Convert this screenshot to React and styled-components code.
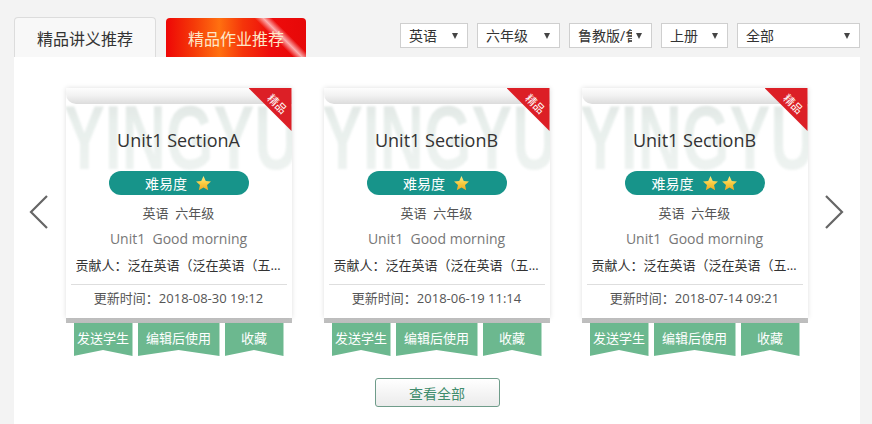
import React from "react";
import styled, { createGlobalStyle } from "styled-components";

const GlobalStyle = createGlobalStyle`
    body { margin : 0; background : #f3f3f3; font-family : "Open Sans", "Noto Sans CJK SC", sans-serif; }
`;
const Page = styled.div`
    width : 846px; padding : 17px 0 0 14px;
`;
const TopBar = styled.div`
    display : flex; justify-content : space-between; align-items : flex-start;
    height : 40px;
`;
const Tabs = styled.div`
    display : flex; gap : 10px; align-items : flex-end; height : 40px;
`;
const Tab = styled.div`
    width : 140px; height : 39px;
    border : ${(props) => (props.$active ? "none" : "1px solid #dcdcdc")};
    border-bottom : none;
    border-radius : 4px 4px 0 0;
    display : flex; align-items : center; justify-content : center;
    font-size : 16px;
    color : ${(props) => (props.$active ? "#fde8c8" : "#333")};
    background : ${(props) => (props.$active
        ? "linear-gradient(45deg, transparent 71%, rgba(255,200,200,.85) 76%, transparent 81%), linear-gradient(90deg, #ee0606 0%, #f53a08 20%, #ff7010 38%, #f5340a 55%, #ee0c0c 75%, #e60808 100%)"
        : "#f8f8f8")};
`;
const Filters = styled.div`
    display : flex; gap : 9px; margin-top : 6px;
`;
const Select = styled.div`
    width : ${(props) => props.$w}px; height : 25px; box-sizing : border-box;
    border : 1px solid #cfcfcf; background : #fff;
    display : flex; align-items : center; padding : 0 9px 0 8px; gap : 4px;
    font-size : 14px; color : #333;
`;
const SelectText = styled.span`
    flex : 1; overflow : hidden; white-space : nowrap; line-height : 23px;
`;
const Caret = styled.span`
    width : 0; height : 0;
    border-left : 3px solid transparent; border-right : 3px solid transparent;
    border-top : 6px solid #444;
`;
const Panel = styled.div`
    background : #fff; padding : 31px 0 30px; min-height : 340px; box-sizing : border-box;
    display : flex; flex-direction : column; align-items : center;
`;
const Carousel = styled.div`
    width : 100%; box-sizing : border-box; padding : 0 15px 0 14px;
    display : flex; justify-content : space-between; align-items : flex-start;
`;
const Arrow = styled.div`
    width : 22px; height : 36px; margin-top : 106px; color : #666;
`;
const Cards = styled.div`
    display : flex; gap : 32px;
`;
const CardWrap = styled.div`
    width : 226px; display : flex; flex-direction : column; align-items : center;
`;
const Card = styled.div`
    position : relative; width : 100%; overflow : hidden; background : #fff;
    box-shadow : 0 0 5px rgba(0,0,0,0.13);
`;
const Curl = styled.div`
    height : 16px; background : linear-gradient(#fdfdfd, #f1f1f1 50%, #dcdcdc);
    border-radius : 0 0 0 10px; position : relative; z-index : 1;
`;
const Watermark = styled.div`
    position : absolute; top : 0px; left : -2px; font-size : 90px; font-weight : bold;
    line-height : 100px; white-space : nowrap; font-family : "Liberation Sans", sans-serif;
    transform : scaleX(0.68); transform-origin : left top;
    background : linear-gradient(#dde1df, #e8efec 35%, #f0f4f2);
    -webkit-background-clip : text; background-clip : text; color : transparent;
    filter : blur(1.3px);
`;
const Corner = styled.div`
    position : absolute; top : 0; right : 0; width : 43px; height : 43px; z-index : 2;
    background : #dc1f26; clip-path : polygon(0 0, 100% 0, 100% 100%);
`;
const CornerText = styled.span`
    position : absolute; left : 13px; top : 9px; width : 30px; height : 14px;
    font-size : 11px; line-height : 14px; color : #fff; text-align : center;
    transform : rotate(45deg);
`;
const Body = styled.div`
    position : relative; z-index : 1; padding : 0 10px 7px;
    display : flex; flex-direction : column; align-items : center;
`;
const Title = styled.div`
    margin-top : 24px; font-size : 18px; line-height : 24px; color : #333;
`;
const Pill = styled.div`
    margin-top : 19px; margin-bottom : 5px; width : 140px; height : 24px; border-radius : 12px;
    background : #17948a; color : #fff; font-size : 14px;
    display : flex; align-items : center; justify-content : center; gap : 8px;
`;
const Stars = styled.span`
    display : flex; gap : 2px;
`;
const Line = styled.div`
    width : 100%; text-align : center; line-height : 26px;
    font-size : ${(props) => props.$size || 13}px;
    color : ${(props) => props.$color || "#333"};
    white-space : pre; overflow : hidden; text-overflow : ellipsis;
`;
const Divider = styled.div`
    align-self : stretch; margin : 6px -5px 0; height : 1px; background : #dedede;
`;
const Shelf = styled.div`
    width : 100%; height : 5px; background : linear-gradient(#c9c9c9, #bcbcbc);
`;
const Actions = styled.div`
    display : flex; gap : 5px;
`;
const ActionBtn = styled.div`
    width : ${(props) => props.$w}px; height : 33px; padding-bottom : 5px; box-sizing : border-box;
    background : #6cb88f; color : #fff; font-size : 13px;
    display : flex; align-items : center; justify-content : center;
    clip-path : polygon(0 0, 100% 0, 100% 100%, 50% calc(100% - 6px), 0 100%);
`;
const MoreBtn = styled.div`
    margin-top : 22px; width : 125px; height : 29px; box-sizing : border-box;
    border : 1px solid #6f9c8a; border-radius : 3px;
    background : linear-gradient(#ffffff, #ebebeb);
    display : flex; align-items : center; justify-content : center;
    font-size : 14px; color : #3f8c6c;
`;

const Star = () => (
    <svg width="17" height="17" viewBox="0 0 24 24">
        <defs>
            <linearGradient id="sg" x1="0" y1="0" x2="0" y2="1">
                <stop offset="0" stopColor="#ffec8a" />
                <stop offset="0.55" stopColor="#f8c93c" />
                <stop offset="1" stopColor="#eea726" />
            </linearGradient>
        </defs>
        <path d="M12 1.5l3.2 6.9 7.3.8-5.5 5 1.6 7.4L12 17.8l-6.6 3.8L7 14.2l-5.5-5 7.3-.8z" fill="url(#sg)" />
    </svg>
);

const Chevron = ({ dir }) => (
    <svg width="22" height="36" viewBox="0 0 22 36">
        <polyline points={dir === "left" ? "19,2 3,18 19,34" : "3,2 19,18 3,34"}
            fill="none" stroke="currentColor" strokeWidth="2.2" />
    </svg>
);

const cards = [
    { title : "Unit1 SectionA", stars : 1, time : "2018-08-30 19:12" },
    { title : "Unit1 SectionB", stars : 1, time : "2018-06-19 11:14" },
    { title : "Unit1 SectionB", stars : 2, time : "2018-07-14 09:21" },
];

const filters = [
    { w : 68, label : "英语" },
    { w : 83, label : "六年级" },
    { w : 83, label : "鲁教版/鲁教版" },
    { w : 67, label : "上册" },
    { w : 123, label : "全部" },
];

const App = () => {
    return (<>
        <GlobalStyle />
        <Page>
            <TopBar>
                <Tabs>
                    <Tab>精品讲义推荐</Tab>
                    <Tab $active>精品作业推荐</Tab>
                </Tabs>
                <Filters>
                    {filters.map((f) => (
                        <Select key={f.label} $w={f.w}>
                            <SelectText>{f.label}</SelectText>
                            <Caret />
                        </Select>
                    ))}
                </Filters>
            </TopBar>
            <Panel>
                <Carousel>
                    <Arrow><Chevron dir="left" /></Arrow>
                    <Cards>
                        {cards.map((c, i) => (
                            <CardWrap key={i}>
                                <Card>
                                    <Curl />
                                    <Watermark>YINGYU</Watermark>
                                    <Corner><CornerText>精品</CornerText></Corner>
                                    <Body>
                                        <Title>{c.title}</Title>
                                        <Pill>
                                            <span>难易度</span>
                                            <Stars>
                                                {Array.from({ length : c.stars }).map((_, k) => <Star key={k} />)}
                                            </Stars>
                                        </Pill>
                                        <Line $color="#555">{"英语  六年级"}</Line>
                                        <Line $size={14} $color="#777">{"Unit1  Good morning"}</Line>
                                        <Line>贡献人：泛在英语（泛在英语（五年级上册）</Line>
                                        <Divider />
                                        <Line $color="#555">更新时间：{c.time}</Line>
                                    </Body>
                                </Card>
                                <Shelf />
                                <Actions>
                                    <ActionBtn $w={59}>发送学生</ActionBtn>
                                    <ActionBtn $w={82}>编辑后使用</ActionBtn>
                                    <ActionBtn $w={59}>收藏</ActionBtn>
                                </Actions>
                            </CardWrap>
                        ))}
                    </Cards>
                    <Arrow><Chevron dir="right" /></Arrow>
                </Carousel>
                <MoreBtn>查看全部</MoreBtn>
            </Panel>
        </Page>
    </>);
};
export default App;
